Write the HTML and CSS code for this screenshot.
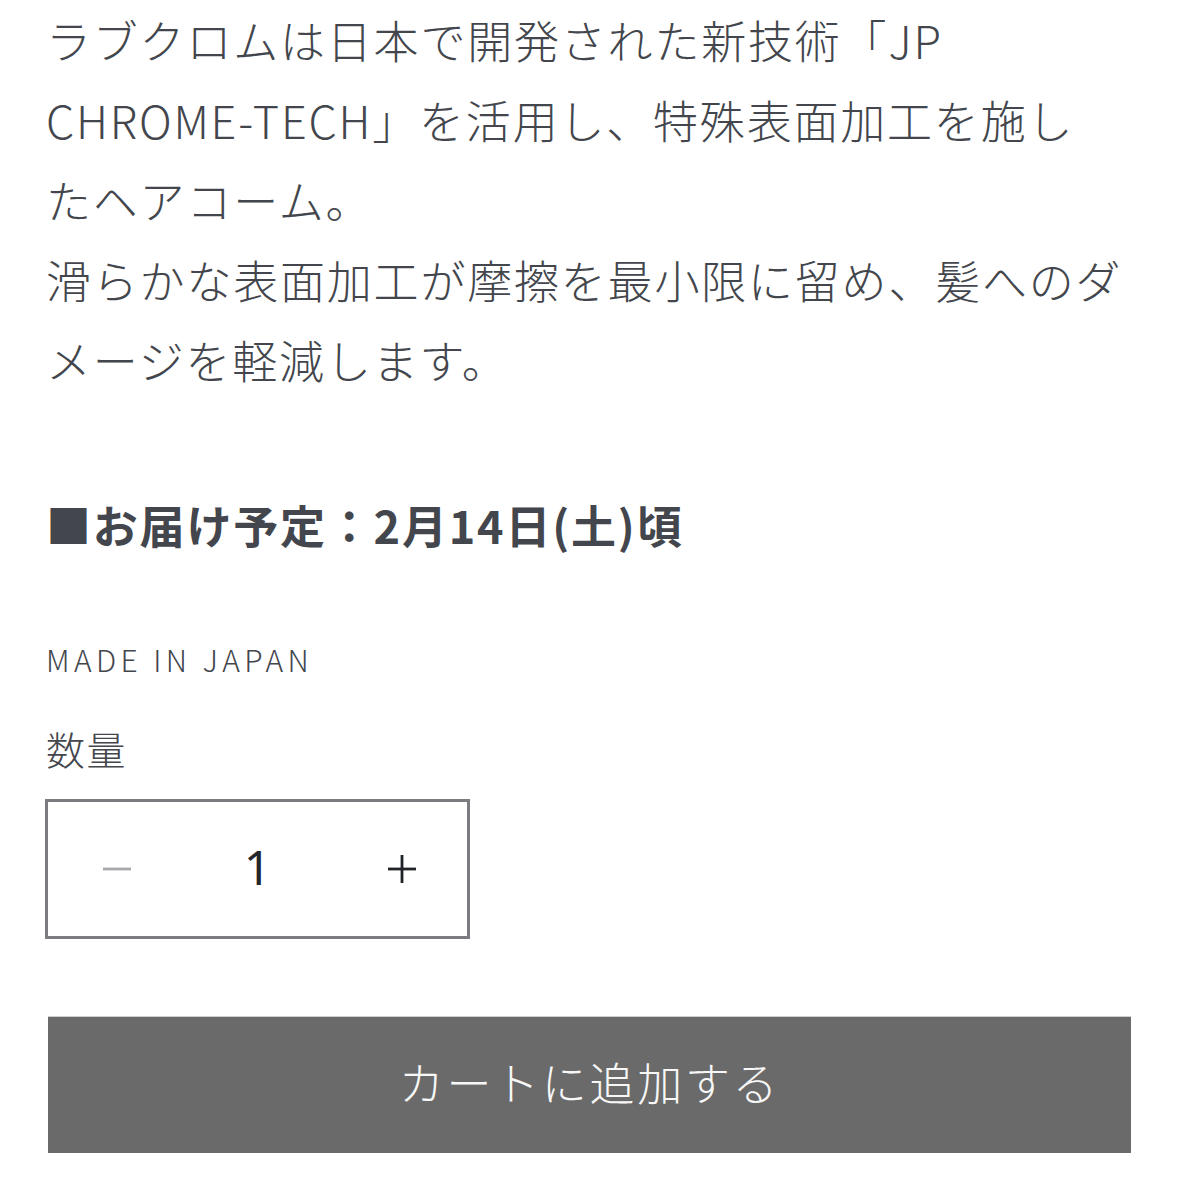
FILE: index.html
```html
<!DOCTYPE html>
<html lang="ja">
<head>
  <meta charset="UTF-8" />
  <meta name="viewport" content="width=device-width, initial-scale=1.0" />
  <title>ラブクロム ヘアコーム</title>
  <link rel="stylesheet" href="styles.css">
</head>
<body>
  <div class="product">
    <div class="description">
      <p>ラブクロムは日本で開発された新技術「JP CHROME-TECH」を活用し、特殊表面加工を施し<br>たヘアコーム。<br>滑らかな表面加工が摩擦を最小限に留め、髪へのダメージを軽減します。</p>
      <p class="delivery"><strong>■お届け予定：2月14日(土)頃</strong></p>
    </div>

    <p class="caption">MADE IN JAPAN</p>

    <label class="qty-label" for="quantity">数量</label>
    <div class="quantity">
      <button class="qty-btn minus" type="button" onclick="changeQty(-1)" aria-label="減らす">
        <svg viewBox="0 0 28 4" width="28" height="4"><rect x="0" y="0.6" width="28" height="2.8" fill="currentColor"/></svg>
      </button>
      <input class="qty-input" id="quantity" type="text" value="1" readonly>
      <button class="qty-btn plus" type="button" onclick="changeQty(1)" aria-label="増やす">
        <svg viewBox="0 0 28 28" width="28" height="28"><rect x="0" y="12.6" width="28" height="2.8" fill="currentColor"/><rect x="12.6" y="0" width="2.8" height="28" fill="currentColor"/></svg>
      </button>
    </div>

    <button class="add-to-cart" type="button">カートに追加する</button>
  </div>

  <script>
    function changeQty(step) {
      const input = document.getElementById("quantity");
      const next = Math.max(1, parseInt(input.value, 10) + step);
      input.value = next;
      document.querySelector(".qty-btn.minus").classList.toggle("disabled", next <= 1);
    }
    document.querySelector(".qty-btn.minus").classList.add("disabled");
  </script>
</body>
</html>
```

FILE: styles.css
```css
* {
  box-sizing: border-box;
  margin: 0;
  padding: 0;
}

body {
  background: #fff;
  color: #43464c;
  font-family: "Noto Sans CJK JP", "Noto Sans", sans-serif;
  font-weight: 300;
}

.product {
  padding: 0 48px 60px 46px;
}

.description p {
  font-size: 45px;
  line-height: 80px;
  letter-spacing: 1.8px;
}

.description .delivery {
  margin-top: 85px;
}

.delivery strong {
  font-weight: 700;
}

.caption {
  margin-top: 76px;
  font-size: 30px;
  line-height: 36px;
  letter-spacing: 4.4px;
}

.qty-label {
  display: block;
  margin-top: 47px;
  font-size: 39px;
  line-height: 48px;
  letter-spacing: 1.5px;
}

.quantity {
  display: flex;
  width: 425px;
  height: 140px;
  margin: 27px 0 0 -1px;
  border: 3px solid #7a7c80;
}

.qty-btn {
  width: 140px;
  background: none;
  border: none;
  color: #1f2226;
  display: flex;
  align-items: center;
  justify-content: center;
  cursor: pointer;
}

.qty-btn.minus {
  padding-right: 2px;
}

.qty-btn.plus {
  padding-left: 10px;
}

.qty-btn.disabled {
  color: #a6a8ab;
}

.qty-input {
  flex: 1;
  min-width: 0;
  border: none;
  outline: none;
  background: none;
  text-align: center;
  font-family: "Noto Sans", sans-serif;
  font-weight: 400;
  font-size: 48px;
  padding-bottom: 6px;
  color: #23262a;
}

.add-to-cart {
  display: block;
  width: 1083px;
  height: 136px;
  margin: 78px 0 0 2px;
  padding-bottom: 8px;
  background: #6a6a6a;
  border: none;
  box-shadow: 0 -1px 0 #cfcfcf;
  color: #f7f7f7;
  font-family: "Noto Sans CJK JP", "Noto Sans", sans-serif;
  font-weight: 300;
  font-size: 45px;
  letter-spacing: 2.7px;
  cursor: pointer;
}
```
